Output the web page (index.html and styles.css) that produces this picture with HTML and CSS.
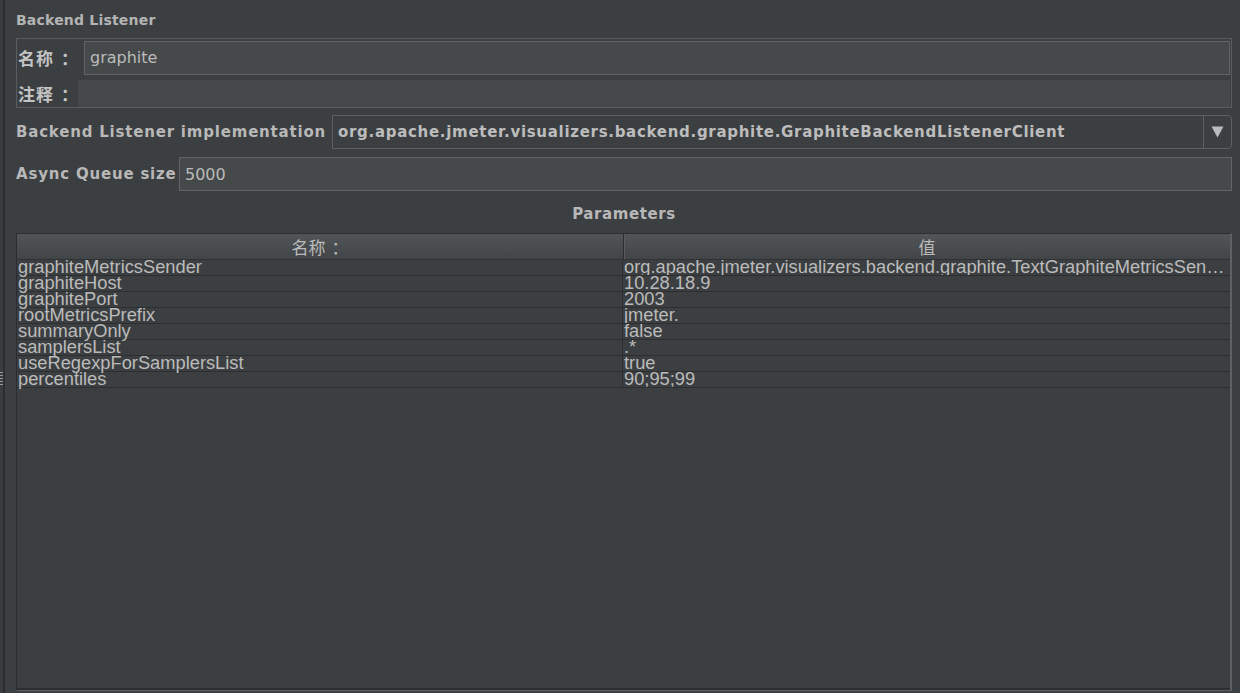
FILE: index.html
```html
<!DOCTYPE html>
<html lang="zh">
<head>
<meta charset="utf-8">
<title>Backend Listener</title>
<link rel="stylesheet" href="styles.css">
</head>
<body>
<div class="app">
  <div class="splitter"><span class="grip"></span></div>
  <main class="panel">
    <h1 class="title">Backend Listener</h1>

    <div class="namebox">
      <div class="nrow nrow-name">
        <label class="nlabel nlabel-name">名称<span class="colon">：</span></label>
        <div class="field field-name">graphite</div>
      </div>
      <div class="nrow nrow-comment">
        <label class="nlabel nlabel-comment">注释<span class="colon">：</span></label>
        <div class="field field-comment"></div>
      </div>
    </div>

    <div class="frow frow-impl">
      <label class="flabel">Backend Listener implementation</label>
      <div class="combo">
        <div class="combo-text">org.apache.jmeter.visualizers.backend.graphite.GraphiteBackendListenerClient</div>
        <div class="combo-btn">
          <svg width="13" height="12" viewBox="0 0 13 12"><path d="M0.5 0.5 L12.5 0.5 L6.5 11.5 Z" fill="#bbbbbb"/></svg>
        </div>
      </div>
    </div>

    <div class="frow frow-queue">
      <label class="flabel">Async Queue size</label>
      <div class="field field-queue">5000</div>
    </div>

    <div class="section-title">Parameters</div>

    <div class="table">
      <div class="thead">
        <div class="th th-name">名称<span class="th-colon">：</span></div>
        <div class="th th-value">值</div>
      </div>
      <div class="tbody">
        <div class="tr"><div class="td td-name">graphiteMetricsSender</div><div class="td td-value">org.apache.jmeter.visualizers.backend.graphite.TextGraphiteMetricsSender</div></div>
        <div class="tr"><div class="td td-name">graphiteHost</div><div class="td td-value">10.28.18.9</div></div>
        <div class="tr"><div class="td td-name">graphitePort</div><div class="td td-value">2003</div></div>
        <div class="tr"><div class="td td-name">rootMetricsPrefix</div><div class="td td-value">jmeter.</div></div>
        <div class="tr"><div class="td td-name">summaryOnly</div><div class="td td-value">false</div></div>
        <div class="tr"><div class="td td-name">samplersList</div><div class="td td-value">.*</div></div>
        <div class="tr"><div class="td td-name">useRegexpForSamplersList</div><div class="td td-value">true</div></div>
        <div class="tr"><div class="td td-name">percentiles</div><div class="td td-value">90;95;99</div></div>
      </div>
    </div>
  </main>
</div>
</body>
</html>
```

FILE: styles.css
```css
html, body {
  margin: 0;
  padding: 0;
  height: 100%;
  background: #3c3f41;
  overflow: hidden;
}

body {
  font-family: "DejaVu Sans", "Noto Sans CJK SC", sans-serif;
  color: #bbbbbb;
}

.app {
  display: flex;
  height: 693px;
}

.splitter {
  width: 3px;
  background: #3a3d3f;
  border-right: 2px solid #2b2d2f;
  position: relative;
  flex: none;
}

.grip {
  position: absolute;
  left: 0;
  top: 372px;
  width: 3px;
  height: 13px;
  background: repeating-linear-gradient(to bottom, #9a9a9a 0 1px, transparent 1px 3px);
}

.panel {
  flex: 1;
  padding: 0 8px 0 11px;
  display: flex;
  flex-direction: column;
  min-width: 0;
}

.title {
  margin: 0;
  height: 38px;
  box-sizing: border-box;
  padding-top: 11px;
  font-size: 14px;
  font-weight: bold;
  line-height: 18px;
  color: #b4b4b4;
  letter-spacing: 0.2px;
}

/* name / comment box */
.namebox {
  border: 1px solid #5a5d5f;
  height: 70px;
  box-sizing: border-box;
  padding: 2px 1px 0 0;
  display: flex;
  flex-direction: column;
  gap: 5px;
}

.nrow {
  display: flex;
  align-items: center;
}

.nlabel {
  font-family: "Noto Sans CJK SC", sans-serif;
  font-weight: bold;
  font-size: 17px;
  color: #c4c4c4;
  padding-left: 1px;
  flex: none;
  letter-spacing: 1px;
  box-sizing: border-box;
  white-space: nowrap;
  overflow: hidden;
}

.colon {
  margin-left: 7px;
}

.nlabel-name { width: 67px; margin-top: -1px; }
.nlabel-comment { width: 61px; margin-top: -1px; }

.field {
  flex: 1;
  background: #45494a;
  box-sizing: border-box;
  color: #bbbbbb;
  font-size: 16px;
  display: flex;
  align-items: center;
}

.field-name {
  height: 34px;
  border: 1px solid #646464;
  padding-left: 5px;
  padding-bottom: 2px;
}

.field-comment {
  height: 27px;
}

/* form rows */
.frow {
  display: flex;
  align-items: center;
  height: 34px;
}

.frow-impl { margin-top: 7px; }
.frow-queue { margin-top: 8px; }

.flabel {
  font-size: 15px;
  font-weight: bold;
  color: #b8b8b8;
  letter-spacing: 0.8px;
  flex: none;
}

.frow-impl .flabel { width: 316px; }
.frow-queue .flabel { width: 163px; }

.combo {
  flex: 1;
  height: 34px;
  box-sizing: border-box;
  border: 1px solid #5e6163;
  border-radius: 0 4px 4px 0;
  display: flex;
  align-items: stretch;
  min-width: 0;
}

.combo-text {
  flex: 1;
  padding-left: 5px;
  font-size: 15px;
  font-weight: bold;
  letter-spacing: 0.7px;
  color: #bdbdbd;
  display: flex;
  align-items: center;
  white-space: nowrap;
  overflow: hidden;
}

.combo-btn {
  width: 27px;
  border-left: 1px solid #5e6163;
  display: flex;
  align-items: center;
  justify-content: center;
}

.field-queue {
  height: 34px;
  border: 1px solid #646464;
  padding-left: 5px;
  font-size: 16px;
}

.section-title {
  height: 42px;
  box-sizing: border-box;
  padding-top: 3px;
  display: flex;
  align-items: center;
  justify-content: center;
  font-size: 15px;
  font-weight: bold;
  color: #b8b8b8;
  letter-spacing: 0.6px;
}

/* table */
.table {
  height: 458px;
  box-sizing: border-box;
  border-top: 1px solid #2b2d2f;
  border-left: 1px solid #2b2d2f;
  border-right: 2px solid #5e6163;
  border-bottom: 1px solid #5e6163;
  box-shadow: inset 0 -2px 0 #2b2d2f;
  display: flex;
  flex-direction: column;
  font-family: "Liberation Sans", "Noto Sans CJK SC", sans-serif;
}

.thead {
  display: flex;
  height: 26px;
  background: linear-gradient(to bottom, #525557, #424547);
  border-bottom: 1px solid #2f3133;
  box-sizing: border-box;
}

.th {
  display: flex;
  align-items: center;
  justify-content: center;
  font-size: 17px;
  color: #bbbbbb;
  font-family: "Noto Sans CJK SC", sans-serif;
}

.th-colon {
  margin-left: 6px;
}

.th-name {
  width: 606px;
  border-right: 1px solid #2b2d2f;
  box-shadow: 1px 0 0 #5a5d5f;
}

.th-value {
  flex: 1;
}

.tr {
  display: flex;
  height: 16px;
  border-bottom: 1px solid #2c2e30;
  box-sizing: border-box;
}

.td {
  font-size: 18.3px;
  line-height: 14px;
  color: #bbbbbb;
  white-space: nowrap;
  overflow: visible;
  padding-left: 1px;
}

.td-name {
  width: 606px;
  border-right: 1px solid #2c2e30;
  box-sizing: border-box;
}

.td-value {
  flex: 1;
  min-width: 0;
  overflow: hidden;
  text-overflow: ellipsis;
  padding-right: 3px;
}
```
